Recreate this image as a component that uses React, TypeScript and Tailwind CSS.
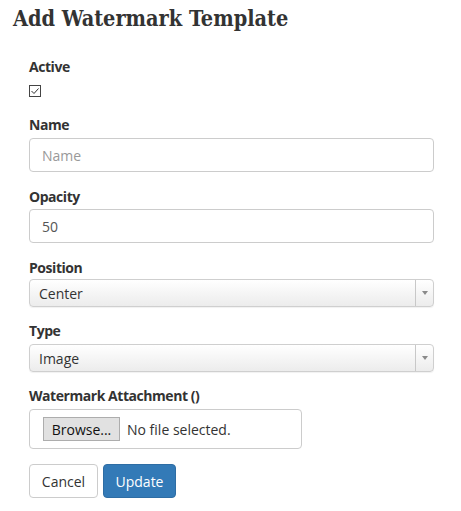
import React from "react";

const labelCls = "block h-[20px] leading-[20px] text-[14px] font-bold text-[#333] tracking-[-0.45px]";

function Select({ value }: { value: string }) {
  return (
    <div className="flex h-[28px] w-[405px] rounded-[4px] border border-[#cfcfcf] bg-gradient-to-b from-[#ffffff] to-[#ececec] shadow-[0_1px_1px_rgba(0,0,0,0.06)]">
      <div className="flex flex-1 items-center pl-[9px] text-[14px] text-[#333]">{value}</div>
      <div className="flex w-[18px] items-center justify-center border-l border-[#c8c8c8]">
        <svg width="6" height="4" viewBox="0 0 6 4">
          <path d="M0 0 L6 0 L3 4 Z" fill="#8a8a8a" />
        </svg>
      </div>
    </div>
  );
}

export default function App() {
  return (
    <div
      className="w-[461px] h-[511px] bg-white overflow-hidden"
      style={{ fontFamily: '"Open Sans", "Noto Sans", sans-serif' }}
    >
      <h1
        className="pl-[13px] pt-[3px] h-[45px] text-[21.5px] leading-[32px] font-bold text-[#333]"
        style={{ fontFamily: '"DejaVu Serif Condensed", "DejaVu Serif", serif', fontStretch: "condensed" }}
      >
        Add Watermark Template
      </h1>
      <div className="pl-[29px] pt-[12px]">
        <label className={labelCls}>Active</label>
        <div className="mt-[8px] h-[12px] w-[12px]">
          <svg width="12" height="12" viewBox="0 0 12 12">
            <rect x="0.5" y="0.5" width="11" height="11" fill="#fff" stroke="#444" strokeWidth="1" />
            <path d="M2.5 6 L5 8.5 L9.5 3.5" fill="none" stroke="#333" strokeWidth="1" />
          </svg>
        </div>

        <label className={`${labelCls} mt-[18px]`}>Name</label>
        <div className="mt-[3px] flex h-[34px] w-[405px] items-center rounded-[4px] border border-[#ccc] px-[12px] text-[14px] text-[#999]">
          Name
        </div>

        <label className={`${labelCls} mt-[15px]`}>Opacity</label>
        <div className="mt-[2px] flex h-[34px] w-[405px] items-center rounded-[4px] border border-[#ccc] px-[12px] text-[14px] text-[#555]">
          50
        </div>

        <label className={`${labelCls} mt-[15px]`}>Position</label>
        <div className="mt-[1px]">
          <Select value="Center" />
        </div>

        <label className={`${labelCls} mt-[14px]`}>Type</label>
        <div className="mt-[3px]">
          <Select value="Image" />
        </div>

        <label className={`${labelCls} mt-[14px]`}>Watermark Attachment ()</label>
        <div className="mt-[3px] flex h-[40px] w-[273px] items-center rounded-[4px] border border-[#ccc] pl-[13px] text-[14px] text-[#333]">
          <div className="flex h-[24px] w-[77px] items-center justify-center border border-[#adadad] bg-[#e1e1e1] text-[14px] text-[#111]">
            Browse...
          </div>
          <span className="ml-[7px]">No file selected.</span>
        </div>

        <div className="mt-[15px] flex gap-[5px]">
          <button className="h-[34px] w-[69px] rounded-[4px] border border-[#ccc] bg-white text-[14px] text-[#333]">
            Cancel
          </button>
          <button className="h-[34px] w-[73px] rounded-[4px] border border-[#2e6da4] bg-[#337ab7] text-[14px] text-white">
            Update
          </button>
        </div>
      </div>
    </div>
  );
}
